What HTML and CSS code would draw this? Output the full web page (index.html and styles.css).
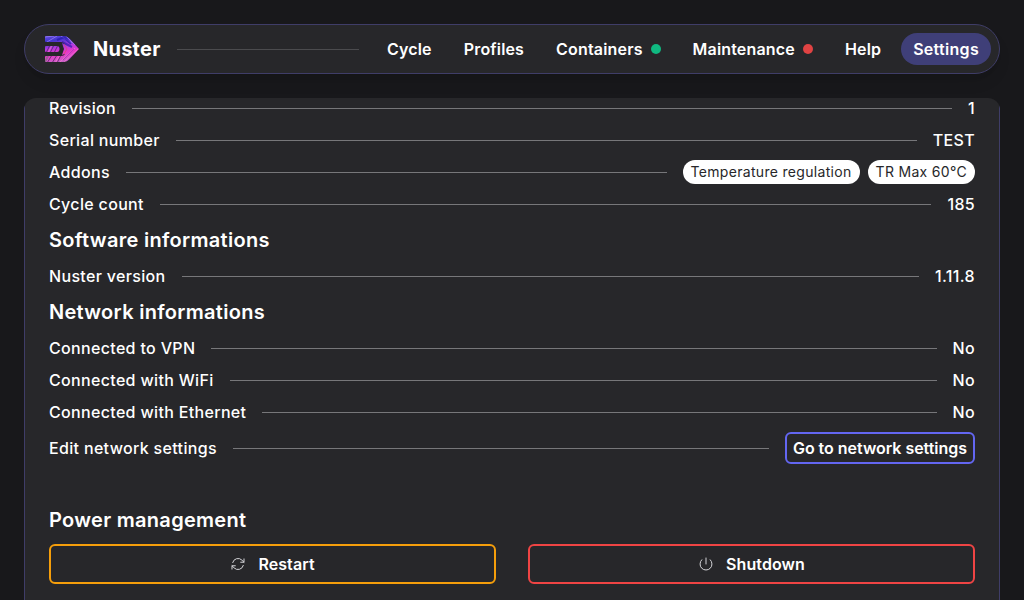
FILE: index.html
```html
<!DOCTYPE html>
<html lang="en">
<head>
<meta charset="utf-8">
<title>Nuster</title>
<link rel="stylesheet" href="styles.css">
</head>
<body>
<header class="topbar">
  <svg class="logo" viewBox="0 0 36 28">
    <defs>
      <linearGradient id="neon" x1="0" y1="0" x2="0.25" y2="1">
        <stop offset="0" stop-color="#6a50e0"/>
        <stop offset="0.25" stop-color="#4335cf"/>
        <stop offset="0.5" stop-color="#b03be0"/>
        <stop offset="0.72" stop-color="#e838c8"/>
        <stop offset="1" stop-color="#c860c8"/>
      </linearGradient>
      <clipPath id="mark">
        <path d="M2 1H19C22 1 24 2 26 4L35 14L26 23.500C24 26 22 27 19 27H2Q1 27 1 26V22Q1 21 2 21H17Q20 21 21 19L23 14L21 9Q20 7 17 7H2Q1 7 1 6V2Q1 1 2 1Z"/>
        <path d="M2 11H13Q15.500 11 15.500 14Q15.500 17 13 17H2Q1 17 1 16V12Q1 11 2 11Z"/>
        <path d="M18 8L23 10V18L18 20L20 14Z"/>
      </clipPath>
    </defs>
    <g clip-path="url(#mark)">
      <rect width="36" height="28" fill="url(#neon)"/>
      <g fill="none" stroke-width="1" stroke-opacity="0.65">
        <path stroke="#a58af5" d="M1 2L10 1M3 7L13 1M17 1L28 8M22 1L31 10"/>
        <path stroke="#2416a8" stroke-width="2" d="M13 5L20 2L27 9M18 7L28 12"/>
        <path stroke="#41194f" d="M2 18L6 10M6 18L10 10M10 18L14 10M3 28L8 20M8 28L13 20M13 28L17 20"/>
        <path stroke="#ff78cf" d="M16 27L31 13M20 27L34 14M4 18L8 10M11 28L16 20"/>
        <path stroke="#9a27b8" d="M19 25L30 14M23 26L34 16"/>
        <path stroke="#e4475e" d="M20 9L23 14L20 19"/>
        <path stroke="#776b78" stroke-width="2" d="M1 27L4 21"/>
      </g>
    </g>
  </svg>
  <span class="brand">Nuster</span>
  <span class="rule rule-nav"></span>
  <nav class="nav">
    <a class="nav-item">Cycle</a>
    <a class="nav-item">Profiles</a>
    <a class="nav-item">Containers<i class="dot dot-ok"></i></a>
    <a class="nav-item">Maintenance<i class="dot dot-error"></i></a>
    <a class="nav-item">Help</a>
    <a class="nav-item nav-active">Settings</a>
  </nav>
</header>
<main class="viewport">
  <div class="panel">
    <div class="row"><span>Revision</span><i class="rule"></i><span>1</span></div>
    <div class="row"><span>Serial number</span><i class="rule"></i><span>TEST</span></div>
    <div class="row"><span>Addons</span><i class="rule"></i><span class="chips"><span class="chip">Temperature regulation</span><span class="chip">TR Max 60°C</span></span></div>
    <div class="row"><span>Cycle count</span><i class="rule"></i><span>185</span></div>
    <h2 class="title">Software informations</h2>
    <div class="row"><span>Nuster version</span><i class="rule"></i><span>1.11.8</span></div>
    <h2 class="title">Network informations</h2>
    <div class="row"><span>Connected to VPN</span><i class="rule"></i><span>No</span></div>
    <div class="row"><span>Connected with WiFi</span><i class="rule"></i><span>No</span></div>
    <div class="row"><span>Connected with Ethernet</span><i class="rule"></i><span>No</span></div>
    <div class="row row-action"><span>Edit network settings</span><i class="rule"></i><a class="link-button">Go to network settings</a></div>
    <h2 class="title title-power">Power management</h2>
    <div class="power">
      <button class="power-button restart">
        <svg class="icon" viewBox="0 0 24 24"><path d="M16.023 9.348h4.992V4.356M2.985 19.644v-4.992h4.992M2.985 14.652l3.181 3.183a8.250 8.250 0 0 0 13.803-3.700M4.031 9.865a8.250 8.250 0 0 1 13.803-3.700l3.181 3.182"/></svg>
        Restart
      </button>
      <button class="power-button shutdown">
        <svg class="icon" viewBox="0 0 24 24"><path d="M5.636 5.636a9 9 0 1 0 12.728 0M12 3v9"/></svg>
        Shutdown
      </button>
    </div>
  </div>
</main>
</body>
</html>
```
FILE: styles.css
```css
* { box-sizing: border-box; }
body {
  margin: 0;
  height: 600px;
  padding: 24px 24px 0;
  display: flex;
  flex-direction: column;
  gap: 24px;
  overflow: hidden;
  background: #18181b;
  color: #fff;
  font: 500 16px/24px Inter, sans-serif;
  letter-spacing: .33px;
}
.topbar {
  flex: none;
  height: 50px;
  display: flex;
  align-items: center;
  padding: 0 8px 0 19px;
  border: 1px solid #3f3d68;
  border-radius: 25px;
  background: #27272a;
  box-shadow: 0 10px 15px -3px rgba(0, 0, 0, .1), 0 4px 6px -4px rgba(0, 0, 0, .1);
}
.logo { width: 36px; height: 28px; margin-right: 13px; }
.brand { font-size: 20px; font-weight: 700; line-height: 28px; letter-spacing: .24px; }
.rule { flex: 1; height: 1px; margin: 0 16px; background: #77777a; }
.rule-nav { background: #4b4b4e; }
.nav { display: flex; gap: 8px; font-weight: 600; letter-spacing: .17px; }
.nav-item {
  display: flex;
  align-items: center;
  gap: 8px;
  height: 32px;
  padding: 0 12px;
  border-radius: 16px;
}
.nav-active { background: #3f3f78; letter-spacing: .3px; }
.dot { width: 10px; height: 10px; border-radius: 50%; }
.dot-ok { background: #10b981; }
.dot-error { background: #e04343; }
.viewport {
  flex: 1;
  min-height: 0;
  overflow: hidden;
  border-radius: 12px 12px 0 0;
}
.panel {
  height: 560px;
  margin-top: -2px;
  display: flex;
  flex-direction: column;
  gap: 8px;
  padding: 0 24px;
  border: solid #3f3d68;
  border-width: 0 1px;
  background: #27272a;
}
.row { display: flex; align-items: center; height: 24px; }
.row-action { height: 32px; }
.chips { display: flex; gap: 8px; }
.chip {
  padding: 0 8px;
  border-radius: 12px;
  background: #fff;
  color: #27272a;
  font-size: 14px;
  font-weight: 400;
  letter-spacing: .31px;
}
.title { margin: 0; font-size: 20px; font-weight: 600; line-height: 32px; letter-spacing: .3px; }
.title-power { margin-top: 32px; }
.link-button {
  height: 32px;
  padding: 0 6px;
  border: 2px solid #6366f1;
  border-radius: 6px;
  font-weight: 600;
  line-height: 28px;
  letter-spacing: -.03px;
}
.power { display: grid; grid-template-columns: 1fr 1fr; gap: 32px; }
.power-button {
  display: flex;
  align-items: center;
  justify-content: center;
  gap: 12px;
  height: 40px;
  padding: 0;
  border: 2px solid;
  border-radius: 6px;
  background: none;
  color: #fff;
  font: inherit;
  font-weight: 600;
  letter-spacing: .08px;
}
.restart { border-color: #f59e0b; }
.shutdown { border-color: #ef4444; }
.icon { width: 16px; height: 16px; fill: none; stroke: #d4d4d8; stroke-width: 1.5; stroke-linecap: round; stroke-linejoin: round; }
```
